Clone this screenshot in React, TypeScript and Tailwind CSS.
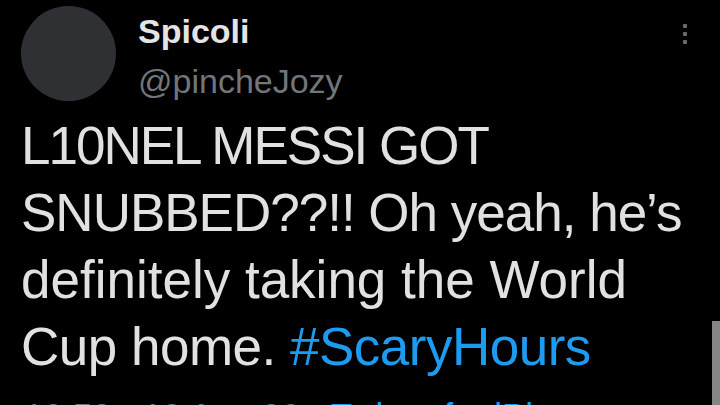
export default function App() {
  return (
    <div className="relative w-[720px] h-[405px] overflow-hidden bg-black font-['Liberation_Sans',Arial,sans-serif]">
      <div className="flex items-start pl-[21px] pt-[6px]">
        <div className="w-[95px] h-[95px] rounded-full bg-[#2f3033] shrink-0" />
        <div className="ml-[22px]">
          <div className="text-[34px] leading-[50px] font-bold text-[#e4e4e4]">Spicoli</div>
          <div className="text-[34px] leading-[50px] text-[#71767b]">@pincheJozy</div>
        </div>
      </div>

      {/* more menu */}
      <div className="absolute left-[683px] top-[24px] flex flex-col gap-[4px]">
        <span className="w-[4px] h-[4px] rounded-[1px] bg-[#6b6b6b]" />
        <span className="w-[4px] h-[4px] rounded-[1px] bg-[#6b6b6b]" />
        <span className="w-[4px] h-[4px] rounded-[1px] bg-[#6b6b6b]" />
      </div>

      <div className="mt-[6px] pl-[21px] text-[53px] leading-[67px] text-[#e1e1e1] whitespace-nowrap">
        <div className="tracking-[-2px]">L10NEL MESSI GOT</div>
        <div className="tracking-[-1px]">SNUBBED??!! Oh yeah, he’s</div>
        <div>definitely taking the World</div>
        <div className="tracking-[-0.5px]">
          Cup home. <span className="text-[#1d9bf0]">#ScaryHours</span>
        </div>
      </div>

      <div className="mt-[16px] pl-[24px] text-[35px] leading-[40px] text-[#71767b] whitespace-nowrap">
        10:50 · 13 Aug 22 · <span className="text-[#1d9bf0]">Twitter for iPhone</span>
      </div>

      {/* scrollbar */}
      <div className="absolute right-0 top-[321px] w-[8px] h-[84px] bg-[#858585]" />
    </div>
  );
}
